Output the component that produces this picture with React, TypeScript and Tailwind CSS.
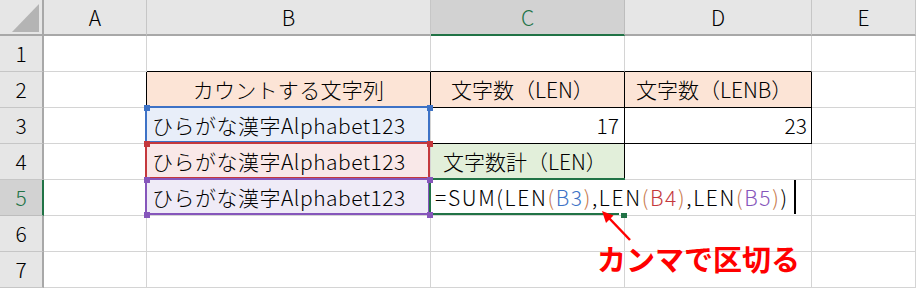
import React from "react";

const G = "border-[#d4d4d4]";
const cellBase = "flex items-center border-r border-b text-[21px] leading-none whitespace-nowrap text-black";

function ColHdr({ label, active }: { label: string; active?: boolean }) {
  return (
    <div
      className={
        "flex items-center justify-center border-r border-b-2 text-[21px] leading-none " +
        (active
          ? "bg-[#d2d2d2] border-r-[#bdbdbd] border-b-[#217346] text-[#217346]"
          : "bg-[#e6e6e6] border-r-[#c6c6c6] border-b-[#a8a8a8] text-black")
      }
    >
      {label}
    </div>
  );
}

function RowHdr({ n, active }: { n: number; active?: boolean }) {
  return (
    <div
      className={
        "flex items-center justify-center border-r-2 border-b text-[21px] leading-none " +
        (active
          ? "bg-[#d2d2d2] border-r-[#217346] border-b-[#bdbdbd] text-[#217346]"
          : "bg-[#e6e6e6] border-r-[#a8a8a8] border-b-[#c6c6c6] text-black")
      }
    >
      {n}
    </div>
  );
}

function Handle({ pos, color }: { pos: string; color: string }) {
  return <div className={"absolute z-20 w-[6px] h-[6px] " + pos + " " + color} />;
}

export default function App() {
  return (
    <div className="relative w-[916px] h-[288px] overflow-hidden bg-white font-light font-['Noto_Sans_CJK_JP',sans-serif]">
      <div className="grid grid-cols-[44px_103px_284px_194px_187px_104px] grid-rows-[36px_repeat(7,36px)]">
        {/* header row */}
        <div className="relative bg-[#e6e6e6] border-r-2 border-b-2 border-[#a8a8a8]">
          <svg className="absolute left-0 top-0" width="42" height="34" viewBox="0 0 42 34">
            <polygon points="12,32 39,32 39,4" fill="#b4b4b4" />
          </svg>
        </div>
        <ColHdr label="A" />
        <ColHdr label="B" />
        <ColHdr label="C" active />
        <ColHdr label="D" />
        <ColHdr label="E" />

        {/* row 1 */}
        <RowHdr n={1} />
        <div className={cellBase + " " + G} />
        <div className={cellBase + " " + G + " border-b-black"} />
        <div className={cellBase + " " + G + " border-b-black"} />
        <div className={cellBase + " " + G + " border-b-black"} />
        <div className={cellBase + " " + G} />

        {/* row 2 */}
        <RowHdr n={2} />
        <div className={cellBase + " " + G + " border-r-black"} />
        <div className={cellBase + " border-black bg-[#fce4d6] justify-center tracking-[0.3px]"}>カウントする文字列</div>
        <div className={cellBase + " border-black bg-[#fce4d6] pl-[20px]"}>文字数（LEN）</div>
        <div className={cellBase + " border-black bg-[#fce4d6] pl-[11px]"}>文字数（LENB）</div>
        <div className={cellBase + " " + G} />

        {/* row 3 */}
        <RowHdr n={3} />
        <div className={cellBase + " " + G} />
        <div className={cellBase + " relative " + G + " bg-[#e8eef9] pl-[5px] tracking-[0.5px]"}>
          ひらがな漢字Alphabet123
          <div className="absolute -left-[2px] -top-[2px] right-0 bottom-0 border-2 border-[#3d72c6]" />
          <Handle pos="-left-[3px] -top-[3px]" color="bg-[#3d72c6]" />
          <Handle pos="-right-[3px] -top-[3px]" color="bg-[#3d72c6]" />
        </div>
        <div className={cellBase + " border-black justify-end pr-[5px]"}>17</div>
        <div className={cellBase + " border-black justify-end pr-[4px]"}>23</div>
        <div className={cellBase + " " + G} />

        {/* row 4 */}
        <RowHdr n={4} />
        <div className={cellBase + " " + G} />
        <div className={cellBase + " relative " + G + " bg-[#f9e8e8] pl-[5px] tracking-[0.5px]"}>
          ひらがな漢字Alphabet123
          <div className="absolute -left-[2px] -top-[2px] right-0 bottom-0 border-2 border-[#c4383d]" />
          <Handle pos="-left-[3px] -top-[3px]" color="bg-[#c4383d]" />
          <Handle pos="-right-[3px] -top-[3px]" color="bg-[#c4383d]" />
        </div>
        <div className={cellBase + " " + G + " border-r-black bg-[#e2efda] pl-[12px]"}>文字数計（LEN）</div>
        <div className={cellBase + " " + G} />
        <div className={cellBase + " " + G} />

        {/* row 5 */}
        <RowHdr n={5} active />
        <div className={cellBase + " " + G} />
        <div className={cellBase + " relative " + G + " bg-[#efebf7] pl-[5px] tracking-[0.5px]"}>
          ひらがな漢字Alphabet123
          <div className="absolute -left-[2px] -top-[2px] right-0 bottom-0 border-2 border-[#8656bb]" />
          <Handle pos="-left-[3px] -top-[3px]" color="bg-[#8656bb]" />
          <Handle pos="-right-[3px] -top-[3px]" color="bg-[#8656bb]" />
          <Handle pos="-left-[3px] -bottom-[3px]" color="bg-[#8656bb]" />
          <Handle pos="-right-[3px] -bottom-[3px]" color="bg-[#8656bb]" />
        </div>
        <div className={cellBase + " relative border-b-[#d4d4d4] border-r-transparent pl-[4px]"}>
          <span className="relative z-10 tracking-[1.65px]">
            =SUM(LEN<span className="text-[#c8784c]">(</span>
            <span className="text-[#3d72c6]">B3</span>
            <span className="text-[#c8784c]">)</span>,LEN<span className="text-[#c8784c]">(</span>
            <span className="text-[#c4383d]">B4</span>
            <span className="text-[#c8784c]">)</span>,LEN<span className="text-[#c8784c]">(</span>
            <span className="text-[#8656bb]">B5</span>
            <span className="text-[#c8784c]">)</span>)
          </span>
          <div className="absolute left-[363px] top-0 w-[2px] h-[34px] bg-black z-10" />
          <div className="absolute -left-[2px] -top-[2px] w-[196px] h-[2px] bg-[#217346]" />
          <div className="absolute -left-[2px] -top-[2px] w-[2px] h-[38px] bg-[#217346]" />
          <div className="absolute -left-[2px] bottom-0 w-[190px] h-[2px] bg-[#217346]" />
          <div className="absolute left-[190px] top-[33px] w-[6px] h-[5px] bg-[#217346]" />
        </div>
        <div className={cellBase + " " + G} />
        <div className={cellBase + " " + G} />

        {/* row 6 */}
        <RowHdr n={6} />
        <div className={cellBase + " " + G} />
        <div className={cellBase + " " + G} />
        <div className={cellBase + " " + G} />
        <div className={cellBase + " " + G} />
        <div className={cellBase + " " + G} />

        {/* row 7 */}
        <RowHdr n={7} />
        <div className={cellBase + " " + G} />
        <div className={cellBase + " " + G} />
        <div className={cellBase + " " + G} />
        <div className={cellBase + " " + G} />
        <div className={cellBase + " " + G} />
      </div>

      {/* annotation arrow */}
      <svg className="absolute left-0 top-0 pointer-events-none" width="916" height="288" viewBox="0 0 916 288">
        <line x1="630" y1="240" x2="609" y2="218" stroke="#ff0000" strokeWidth="2.5" />
        <polygon points="602,211 613.5,215.5 606,223" fill="#ff0000" />
      </svg>
      <div className="absolute left-[597px] top-[244px] text-[29px] leading-none font-bold text-[#ff0000] whitespace-nowrap">
        カンマで区切る
      </div>
    </div>
  );
}
